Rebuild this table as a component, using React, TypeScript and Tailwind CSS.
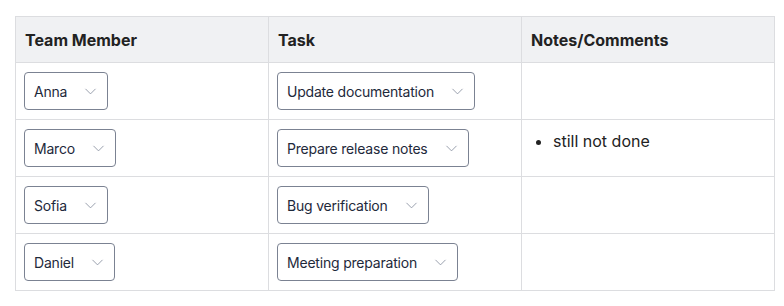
import { ChevronDown } from "lucide-react";

const rows = [
  { member: "Anna", task: "Update documentation", notes: [] as string[] },
  { member: "Marco", task: "Prepare release notes", notes: ["still not done"] },
  { member: "Sofia", task: "Bug verification", notes: [] as string[] },
  { member: "Daniel", task: "Meeting preparation", notes: [] as string[] },
];

const Select = ({ value }: { value: string }) => (
  <div className="inline-flex h-[38px] items-center rounded-[4px] border border-[#7b8292] bg-white pl-[9px] pr-[7px] text-[14px] tracking-[-0.2px] text-[#1e293b]">
    <span>{value}</span>
    <ChevronDown className="ml-[14px] h-[19px] w-[19px] text-[#8b93a1]" strokeWidth={1.1} />
  </div>
);

export default function App() {
  return (
    <div className="bg-white pl-[15px] pt-[16px] font-['Inter',sans-serif]">
      <table className="w-[760px] table-fixed border-collapse border border-[#dcdde0]">
        <thead>
          <tr className="h-[46px] bg-[#f0f1f3]">
            <th className="border border-[#dcdde0] px-[9px] text-left text-[16px] font-bold text-[#222]">Team Member</th>
            <th className="border border-[#dcdde0] px-[9px] text-left text-[16px] font-bold text-[#222]">Task</th>
            <th className="border border-[#dcdde0] px-[9px] text-left text-[16px] font-bold text-[#222]">Notes/Comments</th>
          </tr>
        </thead>
        <tbody>
          {rows.map((r) => (
            <tr key={r.member} className="h-[57px]">
              <td className="border border-[#dcdde0] px-[8px] align-middle">
                <Select value={r.member} />
              </td>
              <td className="border border-[#dcdde0] px-[8px] align-middle">
                <Select value={r.task} />
              </td>
              <td className="border border-[#dcdde0] px-[9px] pt-[9px] align-top">
                {r.notes.length > 0 && (
                  <ul className="list-disc pl-[22px] text-[16px] leading-[24px] text-[#222]">
                    {r.notes.map((n) => (
                      <li key={n}>{n}</li>
                    ))}
                  </ul>
                )}
              </td>
            </tr>
          ))}
        </tbody>
      </table>
    </div>
  );
}
